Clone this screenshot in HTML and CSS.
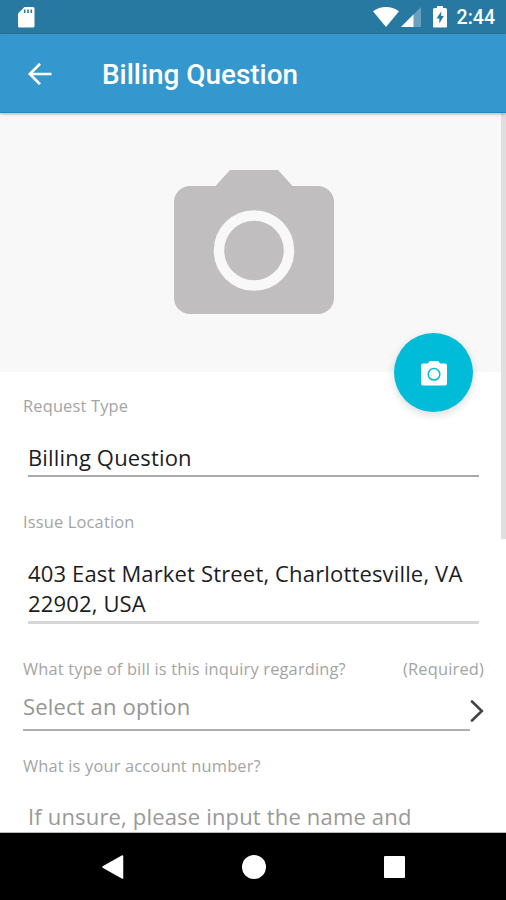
FILE: index.html
```html
<!DOCTYPE html>
<html lang="en">
<head>
    <meta charset="utf-8">
    <title>Billing Question</title>
    <link rel="stylesheet" href="styles.css">
</head>
<body>
    <div class="screen">
        <div class="status-bar">
            <svg class="sd-card" width="17" height="21" viewBox="0 0 17 21">
                <path d="M6.500 0h8.500a1.500 1.500 0 0 1 1.500 1.500v17.500a1.500 1.500 0 0 1-1.500 1.500H1.500A1.500 1.500 0 0 1 0 19V6.500z" fill="#fff"/>
                <path d="M6.700 2.500v3.500M10 2.500v3.500M13.300 2.500v3.500" stroke="#2879a1" stroke-width="1.600"/>
            </svg>
            <div class="status-icons">
                <svg class="wifi" width="26" height="20" viewBox="0 0 26 20">
                    <path d="M0 4.300C7.500-1.400 18.500-1.400 26 4.300L13 20z" fill="#fff"/>
                </svg>
                <svg class="signal" width="20" height="20" viewBox="0 0 20 20">
                    <path d="M20 0v20H0z" fill="#fff" fill-opacity="0.300"/>
                    <path d="M12.500 7.500V20H0z" fill="#fff"/>
                </svg>
                <svg class="battery" width="14" height="22" viewBox="0 0 14 22">
                    <path d="M4 0h6v2h2.500A1.500 1.500 0 0 1 14 3.500v17a1 1 0 0 1-1 1H1a1 1 0 0 1-1-1v-17A1.500 1.500 0 0 1 1.500 2H4z" fill="#fff"/>
                    <path d="M8.200 5.500L3.500 12.500h2.800v5L10.800 10H8.200z" fill="#2879a1"/>
                </svg>
                <span class="clock">2:44</span>
            </div>
        </div>

        <div class="toolbar">
            <svg class="back" width="24" height="22" viewBox="0 0 24 22">
                <path d="M23.500 11H2M12 0.800L1.800 11L12 21.200" fill="none" stroke="#fff" stroke-width="2.700"/>
            </svg>
            <h1>Billing Question</h1>
        </div>

        <div class="content">
            <div class="photo">
                <svg class="placeholder" width="160" height="144" viewBox="0 0 160 144">
                    <path d="M56 0h48l14.500 16H144a16 16 0 0 1 16 16v96a16 16 0 0 1-16 16H16a16 16 0 0 1-16-16V32a16 16 0 0 1 16-16h25.500z" fill="#c0bebf"/>
                    <circle cx="80" cy="80.500" r="35" fill="none" stroke="#f8f8f8" stroke-width="10.500"/>
                </svg>
                <button class="fab">
                    <svg width="26" height="25" viewBox="0 0 26 25">
                        <path d="M9 0h8l2.400 2.600H24a2 2 0 0 1 2 2V22.500a2 2 0 0 1-2 2H2a2 2 0 0 1-2-2V4.600a2 2 0 0 1 2-2h4.600z" fill="#fff"/>
                        <circle cx="13" cy="13.300" r="5.800" fill="none" stroke="#00bcd8" stroke-width="1.500"/>
                    </svg>
                </button>
            </div>

            <div class="form">
                <div class="label request">Request Type</div>
                <div class="value type">Billing Question</div>

                <div class="label issue">Issue Location</div>
                <div class="value location">403 East Market Street, Charlottesville, VA 22902, USA</div>

                <div class="label question">
                    <span class="bill">What type of bill is this inquiry regarding?</span>
                    <span class="required">(Required)</span>
                </div>
                <div class="select">
                    <div class="option"><span>Select an option</span></div>
                    <svg width="14" height="22" viewBox="0 0 14 22">
                        <path d="M2 1.500L11.800 11L2 20.500" fill="none" stroke="#444" stroke-width="2.600" stroke-linecap="round"/>
                    </svg>
                </div>

                <div class="label account">What is your account number?</div>
                <div class="hint">If unsure, please input the name and</div>
            </div>
            <div class="scrollbar"></div>
        </div>

        <div class="nav-bar">
            <svg width="22" height="24" viewBox="0 0 22 24">
                <path d="M20.500 1v22L1 12z" fill="#fff" stroke="#fff" stroke-width="1.500" stroke-linejoin="round"/>
            </svg>
            <div class="home"></div>
            <div class="recent"></div>
        </div>
    </div>
</body>
</html>
```
FILE: styles.css
```css
* {
    box-sizing: border-box;
}
body {
    margin: 0;
    font-family: "Open Sans", sans-serif;
    background: #fff;
}
.screen {
    width: 506px;
    height: 900px;
    display: flex;
    flex-direction: column;
    overflow: hidden;
}

/* Top bars */
.status-bar {
    flex: none;
    height: 34px;
    padding: 0 11px 0 17.500px;
    display: flex;
    align-items: center;
    justify-content: space-between;
    background: #2879a1;
}
.status-icons {
    display: flex;
    align-items: center;
}
.signal {
    margin: 0 12px 0 2px;
}
.battery {
    margin: 0 10px 1px 0;
}
.clock {
    font: 500 19.500px/34px Roboto, sans-serif;
    color: #fff;
    padding-top: 2px;
}
.toolbar {
    flex: none;
    height: 79px;
    padding-left: 28px;
    display: flex;
    align-items: center;
    background: #3498ce;
    border-bottom: 1px solid #2389bf;
    box-shadow: 0 1px 3px rgba(0,0,0,0.300);
    z-index: 1;
}
.back {
    margin-top: 1px;
}
.toolbar h1 {
    margin: 3px 0 0 50px;
    font: 500 27.900px/32px Roboto, sans-serif;
    color: #fff;
}

/* Scrolling area */
.content {
    position: relative;
    height: 720px;
    overflow: hidden;
    border-bottom: 1px solid #bbb;
}
.photo {
    position: relative;
    height: 259px;
    padding: 57px 0 0 173.500px;
    background: #f8f8f8;
}
.fab {
    position: absolute;
    right: 33px;
    bottom: -39.500px;
    width: 79px;
    height: 79px;
    padding: 2px 0 0;
    border: 0;
    border-radius: 50%;
    display: flex;
    align-items: center;
    justify-content: center;
    background: #00bcd8;
    box-shadow: 0 3px 8px rgba(0,0,0,0.150);
}
.scrollbar {
    position: absolute;
    top: 0;
    right: 0;
    width: 5px;
    height: 426px;
    background: #dfdfdf;
}
.form {
    padding: 24px 22px 0 23px;
}
.label {
    font-size: 16.400px;
    line-height: 20px;
    letter-spacing: 0.180px;
    color: #a4a4a4;
    white-space: nowrap;
}
.value {
    margin: 26px 5px 0;
    font-size: 22px;
    line-height: 30px;
    letter-spacing: 0.160px;
    color: #1c1c24;
}
.type {
    padding-bottom: 3px;
    border-bottom: 2px solid #aaa;
}
.issue {
    margin-top: 35px;
}
.location {
    padding-bottom: 3px;
    border-bottom: 3px solid #d6d6d6;
}
.question {
    margin-top: 35px;
    display: flex;
    justify-content: space-between;
}
.select {
    margin-top: 12px;
    display: flex;
    align-items: center;
    font-size: 22px;
    line-height: 30px;
    letter-spacing: 0.170px;
    color: #959595;
}
.option {
    width: 447px;
    height: 40px;
    border-bottom: 2px solid #b0b0b0;
}
.account {
    margin-top: 25px;
}
.hint {
    margin: 25px 5px 0;
    font-size: 22px;
    line-height: 30px;
    letter-spacing: 0.170px;
    color: #999;
    white-space: nowrap;
}

/* Android buttons */
.nav-bar {
    flex: none;
    height: 67px;
    padding: 0 101px 0 102px;
    display: flex;
    align-items: center;
    justify-content: space-between;
    background: #000;
}
.home {
    width: 24px;
    height: 24px;
    border-radius: 50%;
    background: #fff;
}
.recent {
    width: 21px;
    height: 22px;
    border-radius: 1px;
    background: #fff;
}
```
